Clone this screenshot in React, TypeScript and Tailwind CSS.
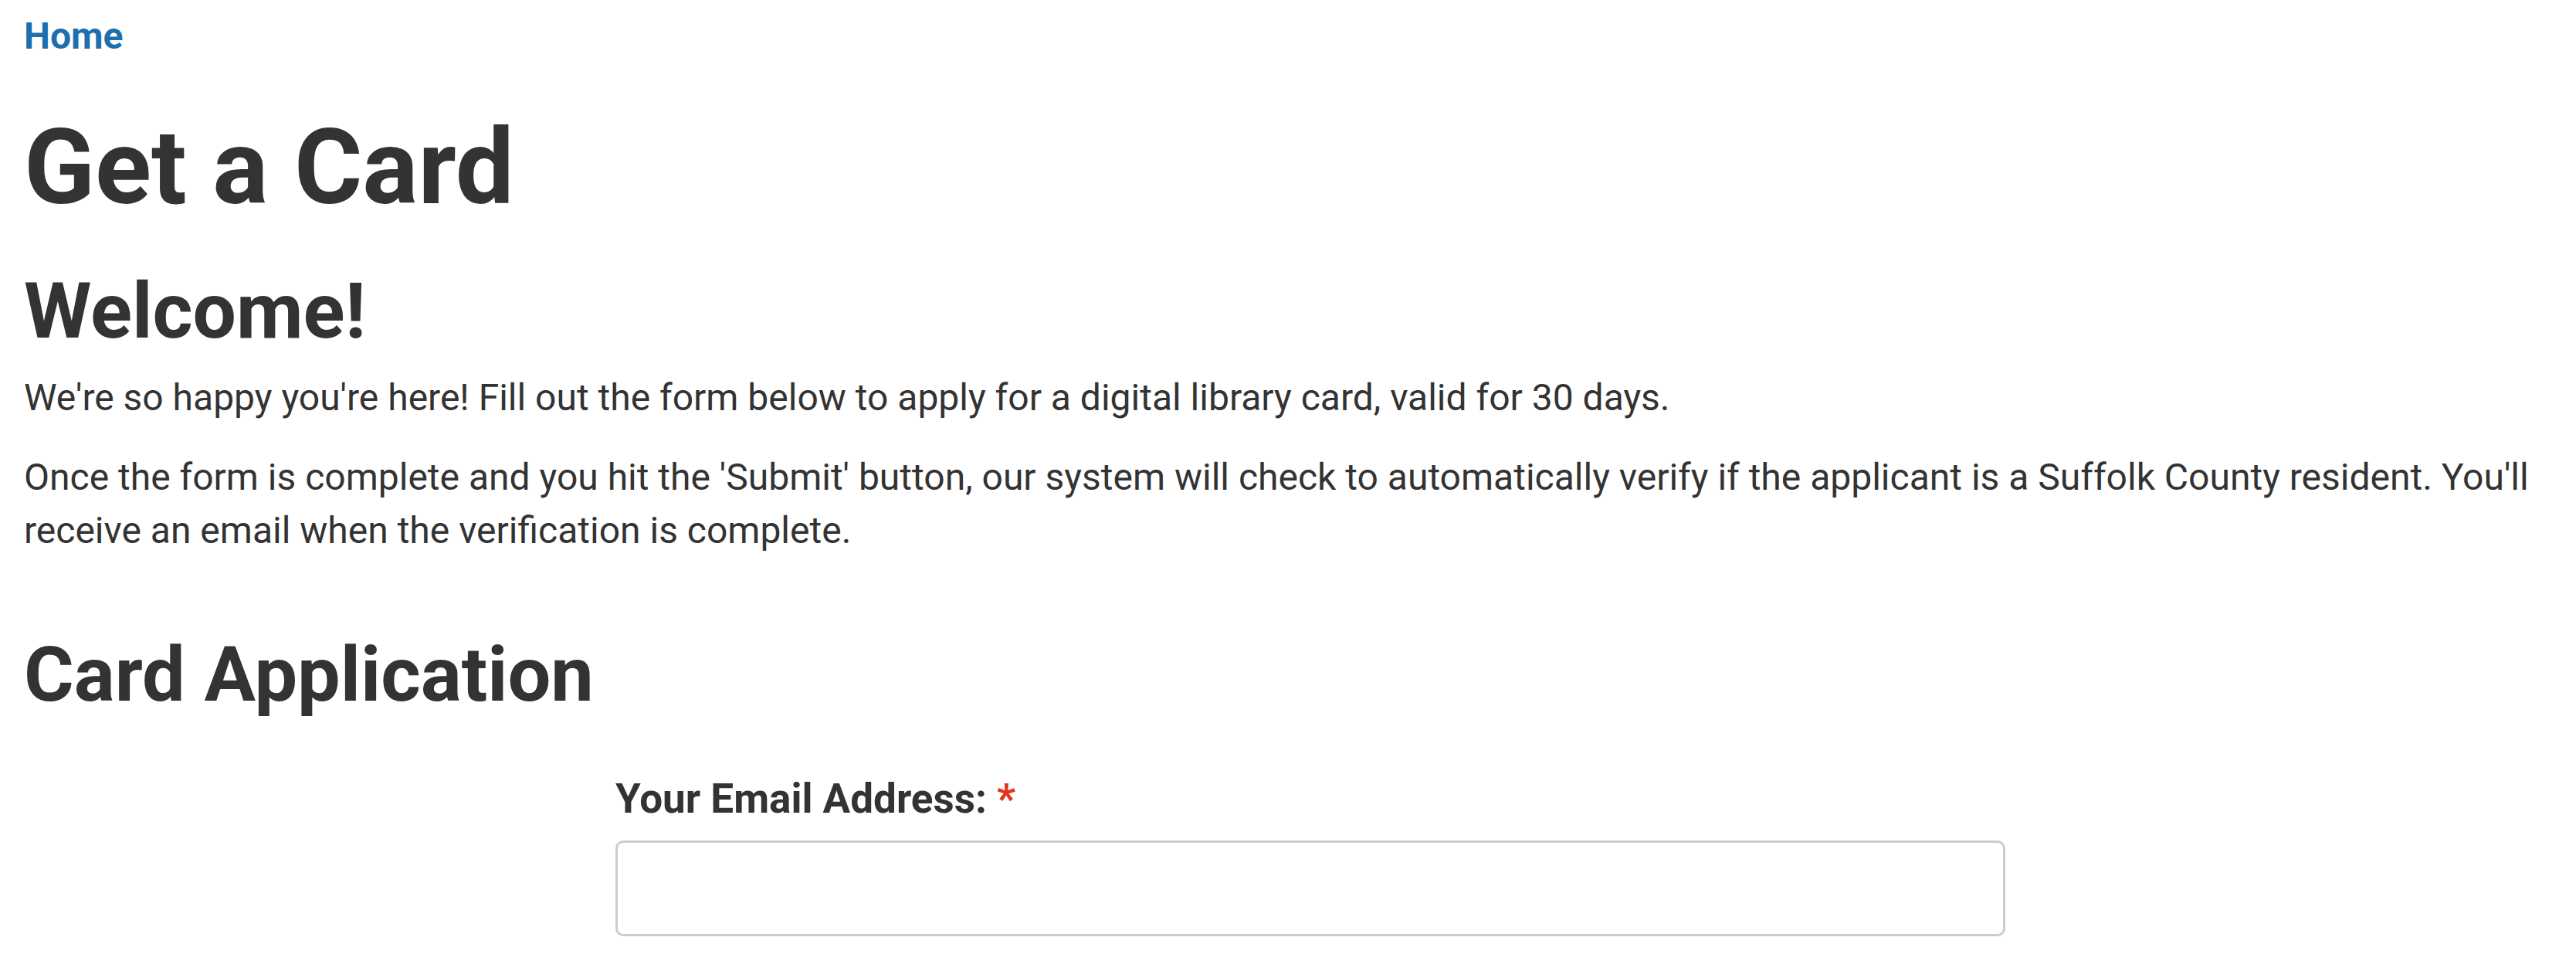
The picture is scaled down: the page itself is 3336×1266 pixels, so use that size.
import React from 'react';

const App: React.FC = () => {
  return (
    <div className="min-h-screen bg-white px-[31px] pt-[11px] pb-10 text-[#333333] [font-family:Roboto,'Liberation_Sans',sans-serif]">
      {/* Breadcrumb */}
      <nav>
        <a href="#" className="block text-[48px] leading-[72px] font-bold text-[#1e6fae]">
          Home
        </a>
      </nav>

      <h1 className="mt-[58px] text-[135px] leading-[152px] font-bold">Get a Card</h1>

      {/* Intro */}
      <h2 className="mt-[55px] text-[100px] leading-[110px] font-bold">Welcome!</h2>
      <p className="mt-[22px] text-[48px] leading-[69px]">
        We're so happy you're here! Fill out the form below to apply for a digital library card, valid for 30 days.
      </p>
      <p className="mt-[34px] text-[48px] leading-[69px]">
        Once the form is complete and you hit the 'Submit' button, our system will check to automatically verify if the
        applicant is a Suffolk County resident. You'll receive an email when the verification is complete.
      </p>

      {/* Form */}
      <h2 className="mt-[97px] text-[99px] leading-[110px] font-bold">Card Application</h2>
      <form className="ml-[766px] mt-[75px] w-[1800px]">
        <label htmlFor="email" className="block text-[53px] leading-[62px] font-bold">
          Your Email Address: <span className="text-[#e4321b]">*</span>
        </label>
        <input
          id="email"
          type="email"
          className="mt-[23px] block h-[124px] w-full rounded-[10px] border-[3px] border-[#cccccc] bg-white px-6 text-[48px] outline-none"
        />
      </form>
    </div>
  );
};

export default App;
